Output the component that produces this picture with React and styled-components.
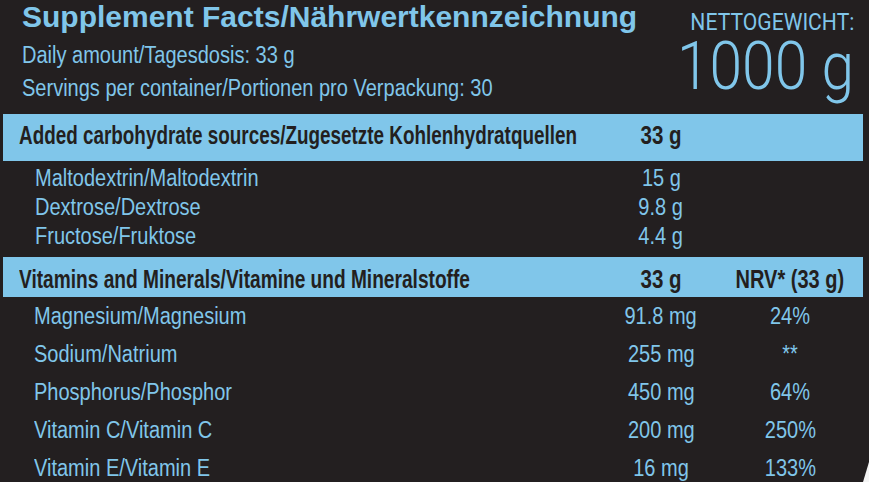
import styled, { createGlobalStyle } from "styled-components"

const BLUE = "#80c6ea"
const DARK = "#231f20"
const FONT = `"Liberation Sans", Arial, sans-serif`

const GlobalStyle = createGlobalStyle`
  html, body {
    margin: 0;
    padding: 0;
    background: ${DARK};
  }
  body {
    font-family: ${FONT};
    color: ${BLUE};
  }
`

const Label = styled.div`
  position: relative;
  width: 869px;
  height: 482px;
  overflow: hidden;
  background: ${DARK};
  padding: 0 6px 0 3px;
  box-sizing: border-box;
`

// the print face is a condensed grotesk; squeeze Arial-metric text to match
const Squeeze = styled.span`
  display: inline-block;
  white-space: nowrap;
  transform: scaleX(${(p) => p.$x || 0.87});
  transform-origin: ${(p) => p.$origin || "left"} center;
`

const Header = styled.header`
  display: flex;
  justify-content: space-between;
  padding: 0 9px 0 19px;
  height: 114px;
`

const Intro = styled.div`
  display: flex;
  flex-direction: column;
  min-width: 0;
  white-space: nowrap;
`

const Title = styled.h1`
  margin: 0;
  font-size: 30px;
  line-height: 34px;
  font-weight: 700;
`

const Note = styled.p`
  margin: 0;
  font-size: 23px;
  line-height: 33.5px;
  &:first-of-type {
    margin-top: 4.5px;
  }
`

const Weight = styled.div`
  display: flex;
  flex-direction: column;
  align-items: flex-end;
  padding-top: 7px;
  font-family: Roboto, ${FONT};
`

const WeightLabel = styled.div`
  font-size: 24px;
  line-height: 30px;
  font-weight: 400;
`

const WeightValue = styled.div`
  font-size: 66px;
  line-height: 60px;
  font-weight: 300;
`

const Bar = styled.div`
  display: grid;
  grid-template-columns: 598px 120px 138px;
  align-items: center;
  background: ${BLUE};
  color: ${DARK};
  font-weight: 700;
  font-size: 25px;
  height: ${(p) => p.$height}px;
  line-height: ${(p) => p.$line}px;
  padding-top: ${(p) => p.$top || 0}px;
  padding-bottom: ${(p) => p.$bottom || 0}px;
  box-sizing: border-box;
`

const Rows = styled.div`
  margin-top: ${(p) => p.$top || 0}px;
  margin-bottom: ${(p) => p.$bottom || 0}px;
`

const Row = styled.div`
  display: grid;
  grid-template-columns: 598px 120px 138px;
  font-size: 23px;
  line-height: ${(p) => p.$line}px;
`

const Name = styled.span`
  padding-left: ${(p) => p.$indent}px;
  white-space: nowrap;
`

const Cell = styled.span`
  text-align: center;
  white-space: nowrap;
`

const Corner = styled.div`
  position: absolute;
  right: 0;
  bottom: 0;
  width: 6px;
  height: 20px;
  background: #f4f4f4;
  clip-path: polygon(100% 0, 100% 100%, 0 100%);
`

const carbs = [
  ["Maltodextrin/Maltodextrin", "15 g"],
  ["Dextrose/Dextrose", "9.8 g"],
  ["Fructose/Fruktose", "4.4 g"],
]

const minerals = [
  ["Magnesium/Magnesium", "91.8 mg", "24%"],
  ["Sodium/Natrium", "255 mg", "**"],
  ["Phosphorus/Phosphor", "450 mg", "64%"],
  ["Vitamin C/Vitamin C", "200 mg", "250%"],
  ["Vitamin E/Vitamin E", "16 mg", "133%"],
]

export default function App() {
  return (
    <>
      <GlobalStyle />
      <Label>
        <Header>
          <Intro>
            <Title>Supplement Facts/Nährwertkennzeichnung</Title>
            <Note>
              <Squeeze>Daily amount/Tagesdosis: 33 g</Squeeze>
            </Note>
            <Note>
              <Squeeze>Servings per container/Portionen pro Verpackung: 30</Squeeze>
            </Note>
          </Intro>
          <Weight>
            <WeightLabel>
              <Squeeze $x={0.88} $origin="right">NETTOGEWICHT:</Squeeze>
            </WeightLabel>
            <WeightValue>
              <Squeeze $x={0.89} $origin="right">1000 g</Squeeze>
            </WeightValue>
          </Weight>
        </Header>

        <Bar $height={47} $line={43} $bottom={4}>
          <Name $indent={16}>
            <Squeeze $x={0.755}>Added carbohydrate sources/Zugesetzte Kohlenhydratquellen</Squeeze>
          </Name>
          <Cell>
            <Squeeze $x={0.82} $origin="center">33 g</Squeeze>
          </Cell>
          <Cell />
        </Bar>
        <Rows $top={3} $bottom={6}>
          {carbs.map(([name, amount]) => (
            <Row key={name} $line={29}>
              <Name $indent={32}>
                <Squeeze>{name}</Squeeze>
              </Name>
              <Cell>
                <Squeeze $origin="center">{amount}</Squeeze>
              </Cell>
              <Cell />
            </Row>
          ))}
        </Rows>

        <Bar $height={40} $line={36} $top={4}>
          <Name $indent={16}>
            <Squeeze $x={0.765}>Vitamins and Minerals/Vitamine und Mineralstoffe</Squeeze>
          </Name>
          <Cell>
            <Squeeze $x={0.82} $origin="center">33 g</Squeeze>
          </Cell>
          <Cell>
            <Squeeze $x={0.8} $origin="center">NRV* (33 g)</Squeeze>
          </Cell>
        </Bar>
        <Rows>
          {minerals.map(([name, amount, nrv]) => (
            <Row key={name} $line={38}>
              <Name $indent={31}>
                <Squeeze>{name}</Squeeze>
              </Name>
              <Cell>
                <Squeeze $origin="center">{amount}</Squeeze>
              </Cell>
              <Cell>
                <Squeeze $origin="center">{nrv}</Squeeze>
              </Cell>
            </Row>
          ))}
        </Rows>
        <Corner />
      </Label>
    </>
  )
}
